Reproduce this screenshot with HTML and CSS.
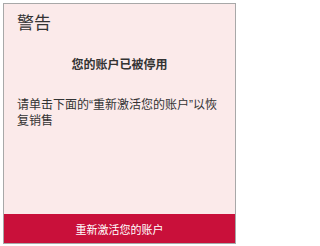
FILE: index.html
```html
<!DOCTYPE html>
<html lang="zh-CN">
<head>
<meta charset="utf-8">
<link rel="stylesheet" href="styles.css">
</head>
<body>
<div class="card">
  <div class="card-body">
    <div class="title">警告</div>
    <div class="heading">您的账户已被停用</div>
    <p class="message">请单击下面的“重新激活您的账户”以恢复销售</p>
  </div>
  <div class="action">重新激活您的账户</div>
</div>
</body>
</html>
```
FILE: styles.css
```css
html, body {
  margin: 0;
  padding: 0;
  background: #ffffff;
}
body {
  font-family: "Liberation Sans", "Noto Sans CJK SC", sans-serif;
  color: #333333;
}
.card {
  margin: 3px;
  width: 233px;
  height: 241px;
  box-sizing: border-box;
  border: 1px solid #a8a8a8;
  background: #fbeaea;
  display: flex;
  flex-direction: column;
}
.card-body {
  flex: 1;
  padding: 10px 13px 0 13px;
}
.title {
  font-size: 17px;
  line-height: 20px;
}
.heading {
  margin-top: 23px;
  font-size: 12px;
  line-height: 16px;
  font-weight: bold;
  text-align: center;
}
.message {
  margin: 24px 0 0 0;
  font-size: 12px;
  line-height: 16px;
}
.action {
  height: 29px;
  background: #c9103a;
  color: #ffffff;
  font-size: 11px;
  display: flex;
  align-items: center;
  justify-content: center;
}
```
